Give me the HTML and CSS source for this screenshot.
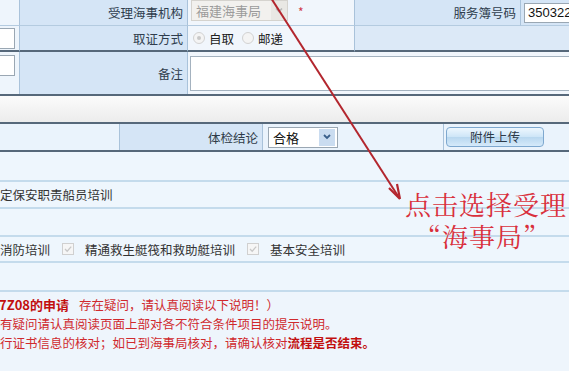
FILE: index.html
```html
<!DOCTYPE html>
<html lang="zh">
<head>
<meta charset="utf-8">
<link rel="stylesheet" href="styles.css">
</head>
<body>
<div class="page">
  <div class="top">
    <div class="cell edge"></div>
    <div class="cell label">受理海事机构</div>
    <div class="cell value">
      <div class="sel dis"><span>福建海事局</span><span class="sel-btn"><svg width="10" height="8" viewBox="0 0 10 8"><path d="M2 2.5 L5 5.5 L8 2.5" fill="none" stroke="#b8b8b8" stroke-width="1.6"/></svg></span></div>
      <span class="req">*</span>
    </div>
    <div class="cell label">服务簿号码</div>
    <div class="cell value2"><div class="inp">350322</div></div>

    <div class="cell edge"><div class="inp-s"></div></div>
    <div class="cell label">取证方式</div>
    <div class="cell value">
      <span class="radio on"></span><span class="rtxt">自取</span>
      <span class="radio"></span><span class="rtxt">邮递</span>
    </div>
    <div class="cell label2 span2"></div>

    <div class="cell edge tall"><div class="inp-s"></div></div>
    <div class="cell label tall">备注</div>
    <div class="cell value span3 tall"><div class="textarea"></div></div>
  </div>

  <div class="bar"></div>

  <div class="mid">
    <div class="mcell"></div>
    <div class="mcell mlabel">体检结论</div>
    <div class="mcell">
      <div class="sel en"><span>合格</span><span class="sel-btn blue"><svg width="10" height="8" viewBox="0 0 10 8"><path d="M2 2 L5 5 L8 2" fill="none" stroke="#3a5f8a" stroke-width="1.8"/></svg></span></div>
    </div>
    <div class="mcell"><div class="btn">附件上传</div></div>
  </div>

  <div class="list">
    <div class="lrow h30"></div>
    <div class="lrow h27"><span class="txt">定保安职责船员培训</span></div>
    <div class="lrow h28"></div>
    <div class="lrow h26">
      <span class="txt">消防培训</span>
      <span class="chk"><svg width="10" height="10" viewBox="0 0 10 10"><path d="M2 5 L4.2 7.2 L8.2 2.6" fill="none" stroke="#c8c8c8" stroke-width="1.3"/></svg></span>
      <span class="txt">精通救生艇筏和救助艇培训</span>
      <span class="chk"><svg width="10" height="10" viewBox="0 0 10 10"><path d="M2 5 L4.2 7.2 L8.2 2.6" fill="none" stroke="#c8c8c8" stroke-width="1.3"/></svg></span>
      <span class="txt">基本安全培训</span>
    </div>
    <div class="lrow h29"></div>
  </div>

  <div class="notes">
    <p class="first"><b>7Z08的申请</b><span class="gap">存在疑问，请认真阅读以下说明！）</span></p>
    <p>有疑问请认真阅读页面上部对各不符合条件项目的提示说明。</p>
    <p>行证书信息的核对；如已到海事局核对，请确认核对<b>流程是否结束。</b></p>
    <p class="frag">。</p>
  </div>

  <svg class="arrow" width="569" height="371" viewBox="0 0 569 371">
    <line x1="271" y1="-2" x2="398" y2="196" stroke="#b3262e" stroke-width="2"/>
    <path d="M400 199 L389 188 M400 199 L397 184" fill="none" stroke="#b3262e" stroke-width="2.2"/>
  </svg>
  <div class="note-callout">
    <div>点击选择受理</div>
    <div class="l2">“海事局”</div>
  </div>
</div>
</body>
</html>
```
FILE: styles.css
```css
html, body {
  margin: 0;
  padding: 0;
}
body {
  width: 569px;
  height: 371px;
  overflow: hidden;
  background: #eef5fc;
  font-family: "Noto Sans CJK SC", "Noto Sans", sans-serif;
  font-size: 12.5px;
  color: #2f3b48;
}
.page {
  position: relative;
  width: 569px;
  height: 371px;
  overflow: hidden;
}
.top {
  display: grid;
  grid-template-columns: 20px 168px 167px 166px 1fr;
  grid-template-rows: 26px 26px 42px;
  border-bottom: 2px solid #56687a;
}
.cell {
  box-sizing: border-box;
  border-right: 1px solid #a9c2da;
  border-bottom: 1px solid #b4cbe0;
  display: flex;
  align-items: center;
}
.edge {
  background: #eef5fc;
}
.label {
  background: #d5e5f6;
  justify-content: flex-end;
  padding-right: 4px;
  color: #2f3d4d;
}
.label2 {
  background: #dce9f7;
}
.value {
  background: #f1f6fc;
  padding-left: 3px;
}
.value2 {
  background: #d5e5f6;
  padding-left: 3px;
  border-right: none;
}
.span2 { grid-column: span 2; border-right: none; }
.span3 { grid-column: span 3; border-right: none; }
.top > .cell:nth-child(6),
.top > .cell:nth-child(7),
.top > .cell:nth-child(8),
.top > .cell:nth-child(9) {
  border-bottom: 2px solid #56687a;
}
.tall { border-bottom: none; }
.tall.edge { align-items: flex-start; padding-top: 3px; }
.tall.value { padding-right: 4px; }
.inp {
  box-sizing: border-box;
  width: 60px;
  height: 20px;
  background: #fff;
  border: 1px solid #9aa7b3;
  padding-left: 3px;
  line-height: 18px;
  font-family: "Liberation Sans", sans-serif;
  font-size: 13px;
  color: #111;
}
.inp-s {
  box-sizing: border-box;
  width: 16px;
  height: 21px;
  margin-left: -1px;
  background: #fff;
  border: 1px solid #9aa7b3;
  border-left: none;
}
.textarea {
  box-sizing: border-box;
  flex: 1;
  height: 35px;
  margin-left: -1px;
  background: #fff;
  border: 1px solid #a4b2bf;
}
.sel {
  box-sizing: border-box;
  display: flex;
  align-items: center;
  height: 21px;
  border: 1px solid #c8c8c8;
  background: #fff;
  font-size: 13px;
}
.sel span:first-child { flex: 1; padding-left: 4px; }
.sel.dis {
  width: 97px;
  background: #f2f1ee;
  color: #9b9b9b;
  border-color: #d5d3ce;
  margin-top: -5px;
}
.sel.en {
  width: 70px;
  color: #111;
  border-color: #9aa7b3;
  margin-left: 5px;
}
.sel-btn {
  width: 16px;
  height: 100%;
  display: flex;
  align-items: center;
  justify-content: center;
  background: #e9e8e4;
}
.sel-btn.blue {
  background: #cadcf0;
  height: 17px;
  margin-right: 2px;
}
.req {
  color: #d03a4a;
  margin-left: 10px;
  font-size: 12px;
  margin-top: -2px;
}
.radio {
  box-sizing: border-box;
  width: 12px;
  height: 12px;
  border-radius: 50%;
  border: 1px solid #d2d2d2;
  background: #f4f4f4;
  margin-left: 2px;
  position: relative;
}
.radio.on::after {
  content: "";
  position: absolute;
  left: 3px;
  top: 3px;
  width: 4px;
  height: 4px;
  border-radius: 50%;
  background: #c8c8c8;
}
.rtxt { margin: 0 6px 0 4px; color: #222; }
.bar {
  height: 26px;
  background: linear-gradient(#fbfbfb, #ececec);
  border-bottom: 2px solid #56687a;
}
.mid {
  display: grid;
  grid-template-columns: 120px 143px 181px 1fr;
  height: 26px;
  border-bottom: 2px solid #56687a;
}
.mcell {
  box-sizing: border-box;
  display: flex;
  align-items: center;
  background: #eaf3fc;
  border-right: 1px solid #a9c2da;
}
.mcell:last-child { border-right: none; padding-left: 2px; }
.mlabel {
  background: #d5e5f6;
  justify-content: flex-end;
  padding-right: 4px;
}
.btn {
  box-sizing: border-box;
  width: 98px;
  height: 20px;
  border: 1px solid #7ea8cf;
  border-radius: 4px;
  background: linear-gradient(#eef7fe, #cde5f7 50%, #b8d7ef 51%, #d6eafa);
  text-align: center;
  line-height: 17px;
  font-size: 12.5px;
  color: #2d3a48;
}
.list { background: #eef6fd; }
.lrow {
  box-sizing: border-box;
  display: flex;
  align-items: center;
  border-bottom: 2px solid #c4dbec;
  color: #333;
}
.h30 { height: 30px; }
.h27 { height: 27px; }
.h28 { height: 28px; }
.h26 { height: 26px; }
.h29 { height: 29px; }
.txt { white-space: nowrap; }
.chk {
  box-sizing: border-box;
  width: 12px;
  height: 12px;
  border: 1px solid #d0d0d0;
  background: #f6f6f6;
  display: inline-flex;
  align-items: center;
  justify-content: center;
  margin: 0 11px 0 12px;
}
.notes {
  padding-top: 3px;
  color: #d02a2e;
}
.notes p {
  margin: 0;
  height: 19px;
  line-height: 19px;
  white-space: nowrap;
}
.notes b { color: #c20f0f; }
.notes .first b { margin-left: -1px; font-size: 13px; }
.notes .gap { margin-left: 10px; }
.notes .frag { height: 16px; line-height: 22px; margin-left: -6px; }
.arrow {
  position: absolute;
  left: 0;
  top: 0;
  pointer-events: none;
}
.note-callout {
  position: absolute;
  left: 405px;
  top: 188px;
  font-family: "Noto Serif CJK SC", "Noto Sans CJK SC", serif;
  font-size: 26px;
  line-height: 32px;
  color: #d9303c;
  white-space: nowrap;
  letter-spacing: 1px;
}
.note-callout div { height: 32px; }
.note-callout .l2 { margin-left: 10px; }
```
